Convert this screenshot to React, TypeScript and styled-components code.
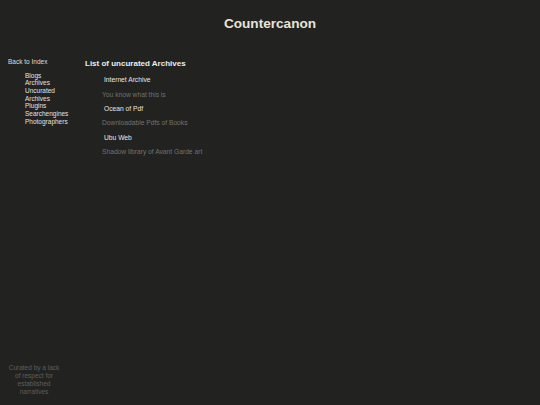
import { Fragment } from 'react';
import styled, { createGlobalStyle } from 'styled-components';

const GlobalStyle = createGlobalStyle`
  html, body {
    margin: 0;
    padding: 0;
    background: #222321;
  }
  body {
    font-family: "Liberation Sans", Arial, sans-serif;
  }
  * {
    box-sizing: border-box;
  }
`

const Page = styled.div`
  min-height: 100vh;
  display: flex;
  flex-direction: column;
  background: #222321;
`

const Header = styled.header`
  padding-top: 16px;
  display: flex;
  justify-content: center;
`

const Title = styled.h1`
  margin: 0;
  font-size: 13.6px;
  line-height: 16px;
  font-weight: bold;
  color: #e9e4d8;
`

const Body = styled.div`
  flex: 1;
  display: flex;
  flex-direction: row;
  margin-top: 26px;
`

const Sidebar = styled.nav`
  width: 85px;
  flex-shrink: 0;
  padding-left: 8px;
  display: flex;
  flex-direction: column;
`

const BackLink = styled.a`
  font-size: 6.5px;
  line-height: 8px;
  color: #dedede;
  text-decoration: none;
`

const NavList = styled.ul`
  list-style: none;
  margin: 5.6px 0 0;
  padding-left: 17px;
`

const NavItem = styled.li`
  font-size: 6.5px;
  line-height: 7.65px;
  color: #e2e2e2;
`

const Footer = styled.footer`
  margin-top: auto;
  width: 52px;
  padding-bottom: 9px;
  text-align: center;
  font-size: 6.5px;
  line-height: 8px;
  color: #5e5e59;
`

const Main = styled.main`
  flex: 1;
  padding-top: 1px;
`

const Heading = styled.h2`
  margin: 0;
  font-size: 8px;
  line-height: 10px;
  font-weight: bold;
  color: #ececec;
`

const ArchiveList = styled.div`
  margin-top: 4.2px;
  display: flex;
  flex-direction: column;
`

const ArchiveName = styled.a`
  padding-left: 19px;
  font-size: 6.7px;
  line-height: 14.4px;
  color: #e6e6e6;
  text-decoration: none;
`

const ArchiveDesc = styled.p`
  margin: 0;
  padding-left: 17px;
  font-size: 6.7px;
  line-height: 14.4px;
  color: #72726d;
`

const navItems = ['Blogs', 'Archives', 'Uncurated', 'Archives', 'Plugins', 'Searchengines', 'Photographers'];

const archives = [
  { name: 'Internet Archive', desc: 'You know what this is' },
  { name: 'Ocean of Pdf', desc: 'Downloadable Pdfs of Books' },
  { name: 'Ubu Web', desc: 'Shadow library of Avant Garde art' },
];

export default function App() {
  return (
    <>
      <GlobalStyle />
      <Page>
        <Header>
          <Title>Countercanon</Title>
        </Header>
        <Body>
          <Sidebar>
            <BackLink href="#">Back to Index</BackLink>
            <NavList>
              {navItems.map((item, i) => (
                <NavItem key={i}>{item}</NavItem>
              ))}
            </NavList>
            <Footer>Curated by a lack of respect for established narratives</Footer>
          </Sidebar>
          <Main>
            <Heading>List of uncurated Archives</Heading>
            <ArchiveList>
              {archives.map((a) => (
                <Fragment key={a.name}>
                  <ArchiveName href="#">{a.name}</ArchiveName>
                  <ArchiveDesc>{a.desc}</ArchiveDesc>
                </Fragment>
              ))}
            </ArchiveList>
          </Main>
        </Body>
      </Page>
    </>
  );
}
